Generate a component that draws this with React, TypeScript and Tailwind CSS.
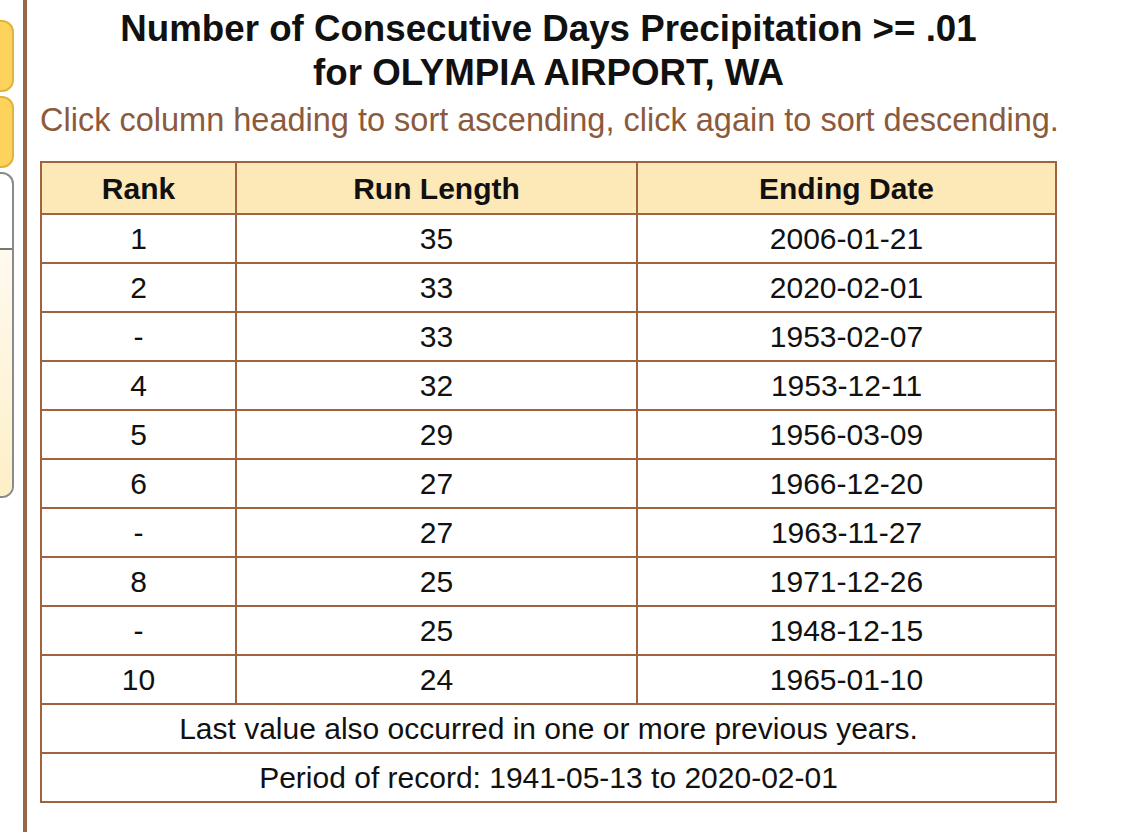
const rows: [string, string, string][] = [
  ['1', '35', '2006-01-21'],
  ['2', '33', '2020-02-01'],
  ['-', '33', '1953-02-07'],
  ['4', '32', '1953-12-11'],
  ['5', '29', '1956-03-09'],
  ['6', '27', '1966-12-20'],
  ['-', '27', '1963-11-27'],
  ['8', '25', '1971-12-26'],
  ['-', '25', '1948-12-15'],
  ['10', '24', '1965-01-10'],
]

export default function App() {
  return (
    <div
      className="flex h-[832px] w-[1125px] overflow-hidden bg-white text-[#111]"
      style={{ fontFamily: '"Liberation Sans", Arial, sans-serif' }}
    >
      {/* side menu, cut off */}
      <div className="w-[14px] shrink-0 overflow-hidden">
        <div className="-ml-[40px] flex w-[54px] flex-col pt-[20px]">
          <div className="h-[72px] rounded-[12px] border-2 border-[#e0b43a] bg-[#fdd35c]" />
          <div className="mt-[4px] h-[72px] rounded-[12px] border-2 border-[#e0b43a] bg-[#fdd35c]" />
          <div className="mt-[4px] h-[326px] rounded-[12px] border-2 border-[#8a8a8a] bg-white">
            <div className="mt-[74px] h-[248px] rounded-b-[10px] border-t-2 border-[#777] bg-gradient-to-b from-[#fffaf0] to-[#fdefc6]" />
          </div>
        </div>
      </div>
      <div className="ml-[9px] w-[4px] shrink-0 bg-[#9a6446]" />
      <div className="ml-[13px] w-[1017px] shrink-0">
        <h1 className="pt-[7px] text-center text-[36.7px] font-bold leading-[44px] whitespace-nowrap">
          Number of Consecutive Days Precipitation &gt;= .01
          <br />
          for OLYMPIA AIRPORT, WA
        </h1>
        <p className="mt-[7px] whitespace-nowrap text-[32.5px] leading-[36px] text-[#8b5a3c]">
          Click column heading to sort ascending, click again to sort descending.
        </p>
        <table className="mt-[23px] w-full border-collapse border-2 border-[#a0633d] text-center text-[30px]">
          <thead>
            <tr className="bg-[#fde8b8]">
              <th className="h-[52px] w-[195px] border-2 border-[#a0633d] p-0 font-bold">Rank</th>
              <th className="h-[52px] w-[401px] border-2 border-[#a0633d] p-0 font-bold">Run Length</th>
              <th className="h-[52px] border-2 border-[#a0633d] p-0 font-bold">Ending Date</th>
            </tr>
          </thead>
          <tbody>
            {rows.map((r, i) => (
              <tr key={i}>
                {r.map((c, j) => (
                  <td key={j} className="h-[49px] border-2 border-[#a0633d] p-0">
                    {c}
                  </td>
                ))}
              </tr>
            ))}
            <tr>
              <td colSpan={3} className="h-[49px] border-2 border-[#a0633d] p-0">
                Last value also occurred in one or more previous years.
              </td>
            </tr>
            <tr>
              <td colSpan={3} className="h-[49px] border-2 border-[#a0633d] p-0">
                Period of record: 1941-05-13 to 2020-02-01
              </td>
            </tr>
          </tbody>
        </table>
      </div>
    </div>
  )
}
